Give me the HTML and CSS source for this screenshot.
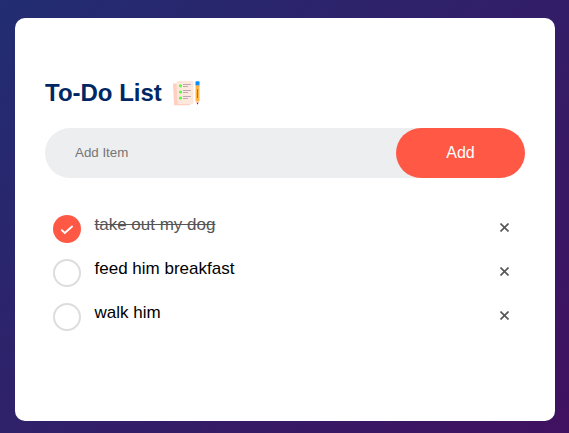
FILE: index.html
```html
<!DOCTYPE html>
<html lang="en">
<head>
<meta charset="utf-8">
<title>To-Do List</title>
<link rel="stylesheet" href="styles.css">
</head>
<body>
<main class="todo-app">
  <h2 class="title">To-Do List
    <svg class="title-icon" viewBox="0 0 28 28" aria-hidden="true">
      <path fill="#ffcfc1" d="M0 3.5h17v21.7H1z"/>
      <path fill="#ffe7dc" d="M4.5 1h15q1 0 1 1v21q0 1-1 1h-14q-1 0-1-1L3.5 2q0-1 1-1z"/>
      <g fill="#4cff43"><circle cx="7.5" cy="5.8" r="1.6"/><circle cx="7.5" cy="12" r="1.6"/><circle cx="7.5" cy="18" r="1.6"/></g>
      <path fill="none" stroke="#b5a0b5" stroke-width=".9" d="M10 4.5h8M10 6.5h5M10 10.5h8M10 12.5h5M10 16.5h8M10 18.5h5"/>
      <path fill="#ffb443" d="M22.5 5h4v16h-4z"/>
      <path fill="#0b8bff" d="M22.5 2.2q0-1 1-1h2q1 0 1 1v3h-4z"/>
      <path fill="#a87539" d="M24 9h1v9h-1z"/>
      <path fill="#ffd0c0" d="M22.5 21h4l-1.3 3h-1.4z"/>
      <path fill="#352839" d="M23.8 22.8h1.5l-.7 2z"/>
    </svg>
  </h2>
  <div class="row">
    <input class="item-input" type="text" placeholder="Add Item" aria-label="Add Item">
    <button class="add-button">Add</button>
  </div>
  <ul class="list">
    <li class="item done">
      <svg class="check" viewBox="0 0 28 28" aria-hidden="true"><circle cx="14" cy="14" r="14" fill="#ff5945"/><path d="M8.3 14.7l3.5 3.3 7.8-7" fill="none" stroke="#fff" stroke-width="1.8"/></svg>
      <span class="label">take out my dog</span>
      <svg class="remove" viewBox="0 0 9 9" role="img" aria-label="Delete"><path d="M.5.5l8 8M8.5.5l-8 8"/></svg>
    </li>
    <li class="item">
      <span class="check circle"></span>
      <span class="label">feed him breakfast</span>
      <svg class="remove" viewBox="0 0 9 9" role="img" aria-label="Delete"><path d="M.5.5l8 8M8.5.5l-8 8"/></svg>
    </li>
    <li class="item">
      <span class="check circle"></span>
      <span class="label">walk him</span>
      <svg class="remove" viewBox="0 0 9 9" role="img" aria-label="Delete"><path d="M.5.5l8 8M8.5.5l-8 8"/></svg>
    </li>
  </ul>
</main>
</body>
</html>
```
FILE: styles.css
```css
* {
  box-sizing: border-box;
  margin: 0;
  padding: 0;
  font-family: "Liberation Sans", Arial, sans-serif;
}

body {
  height: 100vh;
  padding: 18px 14px 12px 15px;
  background: linear-gradient(135deg, #222d72, #401160);
  overflow: hidden;
}

.todo-app {
  height: 403px;
  padding: 61px 30px 0;
  border-radius: 10px;
  background: #fff;
}

.title {
  display: flex;
  align-items: center;
  gap: 11px;
  height: 28px;
  margin-bottom: 21px;
  color: #002765;
  font-size: 24px;
  line-height: 28px;
}

.title-icon {
  width: 28px;
  height: 28px;
  margin-top: 2px;
}

.row {
  display: flex;
  height: 50px;
  border-radius: 30px;
  background: #edeef0;
}

.item-input {
  flex: 1;
  min-width: 0;
  padding: 0 30px 2px;
  border: 0;
  outline: 0;
  background: transparent;
  font-size: 13.333px;
}

.item-input::placeholder {
  color: #757575;
}

.add-button {
  width: 129px;
  border: 0;
  border-radius: 40px;
  background: #ff5945;
  color: #fff;
  font-size: 16px;
}

.list {
  margin-top: 29px;
  list-style: none;
}

.item {
  display: flex;
  height: 44px;
  padding: 8px 16px 0 8px;
}

.check {
  width: 28px;
  height: 28px;
}

.circle {
  border: 2px solid #ddd;
  border-radius: 50%;
}

.label {
  flex: 1;
  margin-left: 13.5px;
  font-size: 17px;
  line-height: 20px;
}

.done .label {
  color: #555;
  text-decoration: line-through;
}

.remove {
  width: 9px;
  height: 9px;
  margin-top: 8px;
  fill: none;
  stroke: #555;
  stroke-width: 1.6;
}
```
